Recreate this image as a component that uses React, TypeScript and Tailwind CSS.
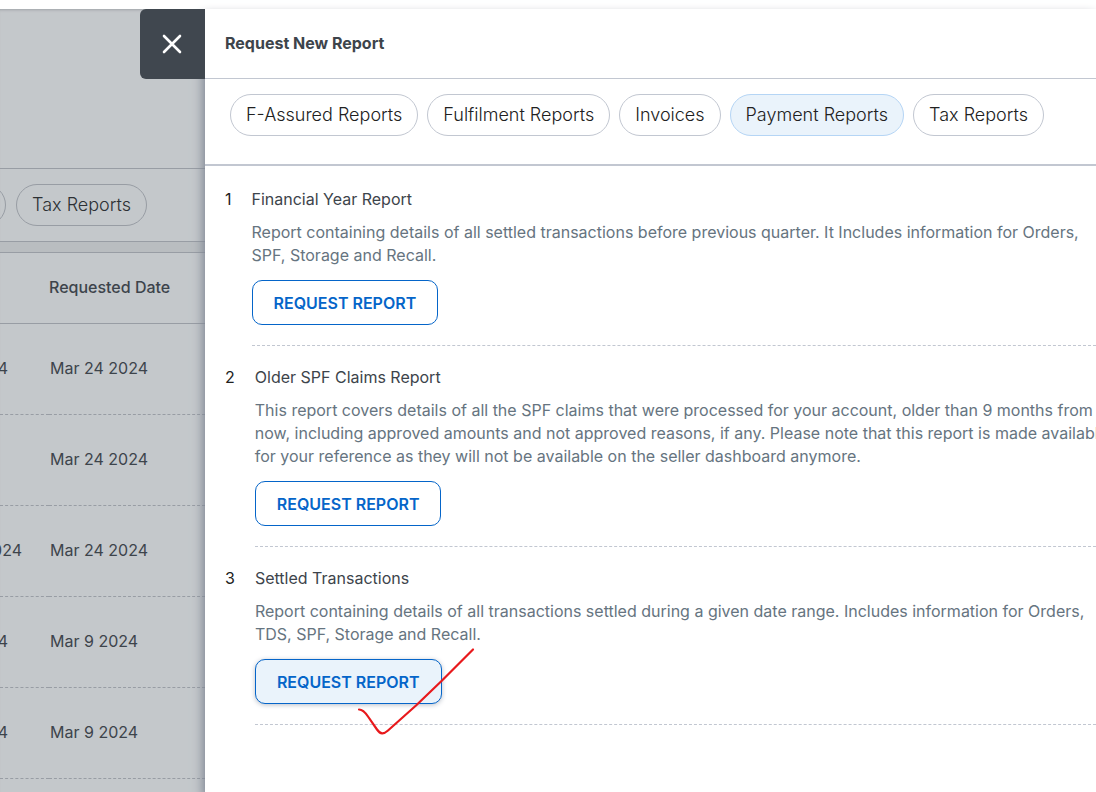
import { clsx } from "clsx";

type Report = { title: string; lines: string[]; highlighted?: boolean };

const categories = [
  "F-Assured Reports",
  "Fulfilment Reports",
  "Invoices",
  "Payment Reports",
  "Tax Reports",
];

const reports: Report[] = [
  {
    title: "Financial Year Report",
    lines: [
      "Report containing details of all settled transactions before previous quarter. It Includes information for Orders,",
      "SPF, Storage and Recall.",
    ],
  },
  {
    title: "Older SPF Claims Report",
    lines: [
      "This report covers details of all the SPF claims that were processed for your account, older than 9 months from",
      "now, including approved amounts and not approved reasons, if any. Please note that this report is made available",
      "for your reference as they will not be available on the seller dashboard anymore.",
    ],
  },
  {
    title: "Settled Transactions",
    lines: [
      "Report containing details of all transactions settled during a given date range. Includes information for Orders,",
      "TDS, SPF, Storage and Recall.",
    ],
    highlighted: true,
  },
];

const history = [
  { period: "2024", requested: "Mar 24 2024", wide: false },
  { period: "", requested: "Mar 24 2024", wide: false },
  { period: "2024", requested: "Mar 24 2024", wide: true },
  { period: "2024", requested: "Mar 9 2024", wide: false },
  { period: "2024", requested: "Mar 9 2024", wide: false },
];

function Chip({ label, active, dimmed }: { label: string; active?: boolean; dimmed?: boolean }) {
  return (
    <button
      type="button"
      className={clsx(
        "h-[42px] shrink-0 rounded-full border px-[15px] text-lg font-light whitespace-nowrap",
        dimmed && "border-[#989da4] text-[#2c3034]",
        active && "border-[#b5d5f5] bg-[#eaf3fb] text-[#212121]",
        !dimmed && !active && "border-[#c2c7d1] bg-white text-[#212121]",
      )}
    >
      {label}
    </button>
  );
}

function CheckStroke() {
  return (
    <svg
      className="pointer-events-none absolute -top-3 left-[102px]"
      width="120"
      height="90"
      viewBox="0 0 120 90"
      fill="none"
      stroke="#e8191c"
      strokeWidth="2.2"
      strokeLinecap="round"
      strokeLinejoin="round"
      aria-hidden="true"
    >
      <path d="M2 62.500C5.500 62.500 8 65 11 69.500L20 82.500C23.500 87.500 26.500 87.500 31 83.500L59 58.500L84 34.500L116 2.500" />
    </svg>
  );
}

function History() {
  return (
    <div className="flex w-[205px] shrink-0 flex-col overflow-hidden bg-[#c4c8cb] shadow-[inset_0_3px_3px_-2px_#9fa3a7]">
      <div className="h-40 border-b border-[#989da4]" />
      <div className="flex h-[73px] items-center justify-end gap-[10px] border-b border-[#989da4] pr-[58px]">
        <button
          type="button"
          aria-label="Payment Reports"
          className="h-[42px] w-[174px] shrink-0 rounded-full border border-[#989da4]"
        />
        <Chip label="Tax Reports" dimmed />
      </div>
      <div className="h-[11px] border-b border-[#989da4] bg-[#b9bdc0]" />
      <table className="w-full border-collapse text-left">
        <thead>
          <tr className="h-[70px] border-b border-[#989da4]">
            <th className="w-[49px] p-0" />
            <th className="p-0 pb-[2px] text-base font-medium whitespace-nowrap text-[#3d444b]">Requested Date</th>
          </tr>
        </thead>
        <tbody>
          {history.map((row, index) => (
            <tr key={index} className="h-[91px] border-b border-dashed border-[#989da4]">
              <td className="p-0 pb-[2px]">
                <div
                  className={clsx(
                    "flex justify-end overflow-hidden text-base text-[#3d444b]",
                    row.wide ? "w-[22px]" : "w-2",
                  )}
                >
                  {row.period}
                </div>
              </td>
              <td className="p-0 pb-[2px] pl-px text-base whitespace-nowrap text-[#3d444b]">{row.requested}</td>
            </tr>
          ))}
        </tbody>
      </table>
    </div>
  );
}

export default function App() {
  return (
    <div className="flex h-screen flex-col overflow-hidden bg-white pt-[9px] font-['Inter',sans-serif]">
      <div className="flex min-h-0 grow">
        <History />
        <section
          aria-labelledby="panel-title"
          className="relative flex min-w-0 grow flex-col bg-white shadow-[-2px_6px_10px_#7d8492]"
        >
          <button
            type="button"
            aria-label="Close"
            className="absolute top-0 right-full flex h-[70px] w-[65px] items-center justify-center rounded-l-md bg-[#40474f] pr-[2px] text-white"
          >
            <svg width="20" height="20" viewBox="0 0 20 20" fill="none" stroke="currentColor" strokeWidth="2.6" strokeLinecap="round" aria-hidden="true">
              <path d="M2 2L18 18M18 2L2 18" />
            </svg>
          </button>
          <header className="flex h-[70px] items-center border-b border-[#c2c7d1] px-5 pb-[2px]">
            <h1 id="panel-title" className="text-base font-bold text-[#3d444b]">
              Request New Report
            </h1>
          </header>
          <nav className="flex gap-[9px] border-b-2 border-[#c2c7d1] px-[25px] pt-[15px] pb-7">
            {categories.map((name) => (
              <Chip key={name} label={name} active={name === "Payment Reports"} />
            ))}
          </nav>
          <ol className="overflow-hidden pt-[2px] pb-5 pl-5">
            {reports.map((report, index) => (
              <li key={report.title} className="flex gap-5 pt-5">
                <span className="text-base leading-[22px] text-[#212121]">{index + 1}</span>
                <div className="min-w-0 grow border-b border-dashed border-[#c2c7d1] pb-5">
                  <h2 className="text-base leading-[22px] text-[#3d444b]">{report.title}</h2>
                  <p className="mt-[11px] text-base leading-[23px] whitespace-nowrap text-[#667480]">
                    {report.lines.map((line) => (
                      <span key={line} className="block">
                        {line}
                      </span>
                    ))}
                  </p>
                  <div className="relative mt-[13px] w-fit">
                    <button
                      type="button"
                      className={clsx(
                        "block h-[45px] rounded-[10px] border border-[#0565c9] px-[21px] text-base font-semibold text-[#0565c9]",
                        report.highlighted ? "bg-[#eaf3fb] shadow-[0_1px_5px_#b8bec8]" : "bg-white",
                      )}
                    >
                      REQUEST REPORT
                    </button>
                    {report.highlighted && <CheckStroke />}
                  </div>
                </div>
              </li>
            ))}
          </ol>
        </section>
      </div>
    </div>
  );
}
